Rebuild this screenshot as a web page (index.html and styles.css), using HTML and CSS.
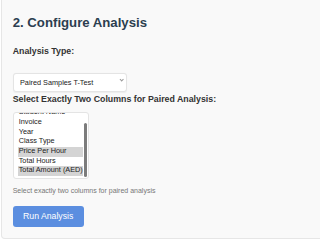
FILE: index.html
```html
<!DOCTYPE html>
<html lang="en">
<head>
<meta charset="utf-8">
<title>Configure Analysis</title>
<link rel="stylesheet" href="styles.css">
</head>
<body>
<div class="page">
  <section class="card">
    <h2 class="card-title">2. Configure Analysis</h2>
    <label class="field-label field-label--type" for="analysis-type">Analysis Type:</label>
    <div class="select-wrap">
      <select id="analysis-type" class="select">
        <option>Paired Samples T-Test</option>
        <option>Independent Samples T-Test</option>
        <option>One-Way ANOVA</option>
      </select>
    </div>
    <div class="field-label field-label--cols" id="columns-label">Select Exactly Two Columns for Paired Analysis:</div>
    <div class="listbox" role="listbox" aria-multiselectable="true" aria-labelledby="columns-label">
      <div class="opt" role="option">Student Name</div>
      <div class="opt" role="option">Invoice</div>
      <div class="opt" role="option">Year</div>
      <div class="opt" role="option">Class Type</div>
      <div class="opt is-selected" role="option" aria-selected="true">Price Per Hour</div>
      <div class="opt" role="option">Total Hours</div>
      <div class="opt is-selected" role="option" aria-selected="true">Total Amount (AED)</div>
      <span class="listbox-thumb"></span>
    </div>
    <p class="help">Select exactly two columns for paired analysis</p>
    <button class="btn" type="button">Run Analysis</button>
  </section>
</div>
</body>
</html>
```

FILE: styles.css
```css
html, body {
  margin: 0;
  padding: 0;
  background: #ffffff;
  overflow: hidden;
  font-family: "Liberation Sans", Arial, sans-serif;
}

.page {
  padding-left: 1px;
}

.card {
  margin-right: -8px;
  padding: 14.6px 10px 11px 10.7px;
  background: #f9f9f9;
  border: 1px solid #e6e6e6;
  border-top: 0;
  border-radius: 0 0 4px 4px;
}

.card-title {
  margin: 0;
  font-size: 13.2px;
  line-height: 15px;
  font-weight: 700;
  color: #2c3e50;
}

.field-label {
  display: block;
  font-size: 8.8px;
  line-height: 10px;
  font-weight: 700;
  color: #333333;
}

.field-label--type {
  margin-top: 16.4px;
}

.field-label--cols {
  margin-top: 2.6px;
}

.select-wrap {
  position: relative;
  width: 114px;
  margin-top: 16.7px;
}

.select-wrap::after {
  content: "";
  position: absolute;
  left: 107.6px;
  top: 5.6px;
  width: 2.4px;
  height: 2.4px;
  border-right: 1px solid #9a9a9a;
  border-bottom: 1px solid #9a9a9a;
  transform: rotate(45deg);
  pointer-events: none;
}

.select {
  display: block;
  width: 100%;
  height: 19px;
  margin: 0;
  padding: 0 0 0 6.3px;
  -webkit-appearance: none;
  appearance: none;
  background: #ffffff;
  border: 1px solid #e4e4e4;
  border-radius: 3px;
  box-shadow: 0 0.5px 1px rgba(0, 0, 0, 0.05);
  font-family: "Liberation Sans", Arial, sans-serif;
  font-size: 7.3px;
  color: #222222;
  outline: none;
}

.listbox {
  position: relative;
  box-sizing: border-box;
  display: flex;
  flex-direction: column;
  justify-content: flex-end;
  width: 76.5px;
  height: 66.5px;
  margin-top: 8.2px;
  padding: 0 5.5px 2px 4px;
  background: #ffffff;
  border: 1px solid #e4e4e4;
  border-radius: 3px;
  overflow: hidden;
  font-size: 7.3px;
  color: #222222;
}

.opt {
  flex: 0 0 auto;
  padding: 0 1px 1px;
  line-height: 8.67px;
  white-space: nowrap;
  overflow: hidden;
}

.opt.is-selected {
  background: #d4d4d4;
}

.listbox-thumb {
  position: absolute;
  top: 9.5px;
  right: 1.7px;
  width: 3px;
  height: 54px;
  border-radius: 1.5px;
  background: #7c7c7c;
}

.help {
  margin: 7.6px 0 0;
  font-size: 7px;
  line-height: 8px;
  color: #777777;
}

.btn {
  display: block;
  margin-top: 11.4px;
  padding: 5.5px 10.4px;
  border: 0;
  border-radius: 3px;
  background: #5b8ee0;
  color: #ffffff;
  font-family: "Liberation Sans", Arial, sans-serif;
  font-size: 8.7px;
  line-height: 10px;
}
```
